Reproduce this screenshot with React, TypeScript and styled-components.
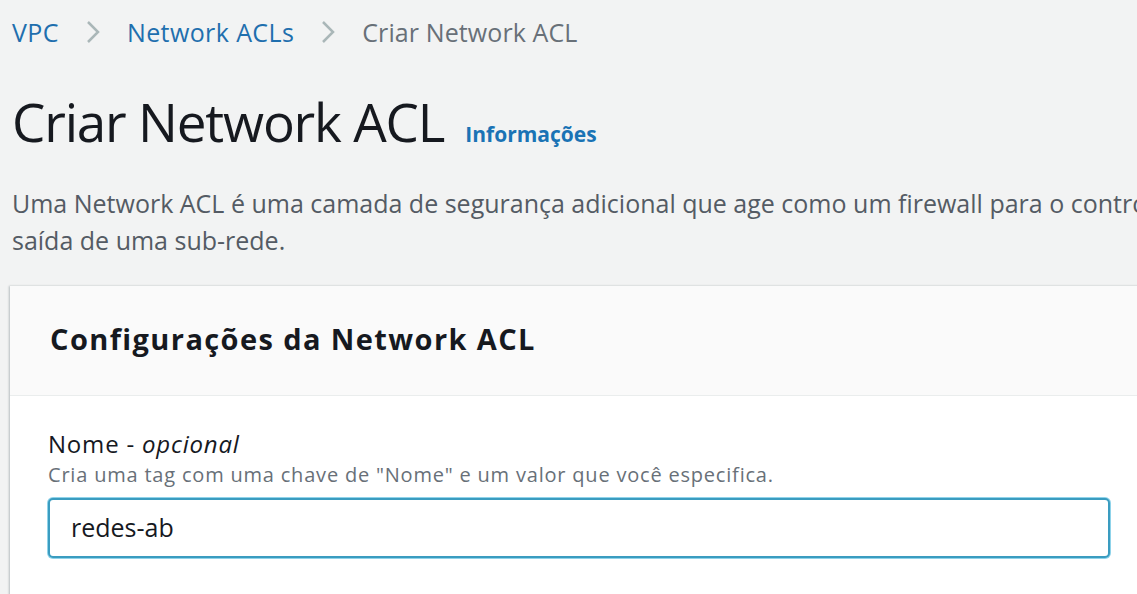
import React from "react";
import styled, { createGlobalStyle } from "styled-components";

const Global = createGlobalStyle`
  html, body { margin: 0; padding: 0; background: #f2f3f3; overflow: hidden; }
  body { font-family: "Open Sans", "Noto Sans", sans-serif; }
  #root { width: 1137px; height: 594px; overflow: hidden; }
`;

const Page = styled.div`
  display: flex;
  flex-direction: column;
  padding: 0 0 0 12px;
  width: 1400px;
`;

const Breadcrumbs = styled.nav`
  display: flex;
  align-items: center;
  gap: 26px;
  height: 64px;
  font-size: 25px;
`;

const Crumb = styled.span<{ $current?: boolean }>`
  color: ${(p) => (p.$current ? "#687078" : "#1f6fae")};
  letter-spacing: ${(p) => (p.$current ? "0.1px" : "0.4px")};
`;

const Chevron = styled.svg`
  width: 16px;
  height: 26px;
  flex: none;
`;

const TitleRow = styled.div`
  display: flex;
  align-items: baseline;
  gap: 21px;
  margin-top: 25px;
`;

const Title = styled.h1`
  margin: 0;
  font-size: 53px;
  font-weight: 400;
  color: #16191f;
  line-height: 66px;
  letter-spacing: -1.2px;
`;

const InfoLink = styled.a`
  font-size: 21px;
  font-weight: 700;
  color: #1a73b5;
`;

const Description = styled.p`
  margin: 30px 0 0 0;
  font-size: 25px;
  line-height: 37px;
  color: #545b64;
  width: 1600px;
`;

const DescLine = styled.span`
  display: block;
  white-space: nowrap;
`;

const Panel = styled.section`
  margin: 27px 0 0 -2px;
  background: #ffffff;
  box-shadow: -1px 0 2px rgba(0, 28, 36, 0.25);
  display: flex;
  flex-direction: column;
`;

const PanelHeader = styled.header`
  background: #fafafa;
  border-bottom: 1px solid #eaeded;
  height: 110px;
  display: flex;
  align-items: center;
  padding-left: 40px;
  padding-bottom: 4px;
  box-sizing: border-box;
`;

const PanelTitle = styled.h2`
  margin: 0;
  font-size: 29px;
  font-weight: 700;
  letter-spacing: 1.4px;
  color: #16191f;
`;

const PanelBody = styled.div`
  padding: 32px 0 40px 38px;
  display: flex;
  flex-direction: column;
`;

const Label = styled.label`
  font-size: 24px;
  letter-spacing: 0.8px;
  color: #16191f;
  line-height: 32px;
  em { font-style: italic; }
`;

const Hint = styled.div`
  font-size: 20px;
  letter-spacing: 0.8px;
  color: #687078;
  line-height: 30px;
`;

const Input = styled.div`
  margin-top: 8px;
  width: 1062px;
  height: 60px;
  box-sizing: border-box;
  border: 2px solid #3a9cc0;
  box-shadow: 0 0 0 1px #8fd3ea;
  border-radius: 5px;
  display: flex;
  align-items: center;
  padding-left: 21px;
  padding-bottom: 2px;
  font-size: 25px;
  color: #16191f;
  background: #fff;
`;

const Sep = () => (
  <Chevron viewBox="0 0 16 26">
    <path d="M3 3 L13 13 L3 23" fill="none" stroke="#aab7b8" strokeWidth="2.5" />
  </Chevron>
);

export default function App() {
  return (
    <>
      <Global />
      <Page>
        <Breadcrumbs>
          <Crumb>VPC</Crumb>
          <Sep />
          <Crumb>Network ACLs</Crumb>
          <Sep />
          <Crumb $current>Criar Network ACL</Crumb>
        </Breadcrumbs>
        <TitleRow>
          <Title>Criar Network ACL</Title>
          <InfoLink>Informações</InfoLink>
        </TitleRow>
        <Description>
          <DescLine>
            Uma Network ACL é uma camada de segurança adicional que age como um firewall para o controle do tráfego de entrada e
          </DescLine>
          <DescLine>saída de uma sub-rede.</DescLine>
        </Description>
        <Panel>
          <PanelHeader>
            <PanelTitle>Configurações da Network ACL</PanelTitle>
          </PanelHeader>
          <PanelBody>
            <Label>
              Nome - <em>opcional</em>
            </Label>
            <Hint>Cria uma tag com uma chave de "Nome" e um valor que você especifica.</Hint>
            <Input>redes-ab</Input>
          </PanelBody>
        </Panel>
      </Page>
    </>
  );
}
